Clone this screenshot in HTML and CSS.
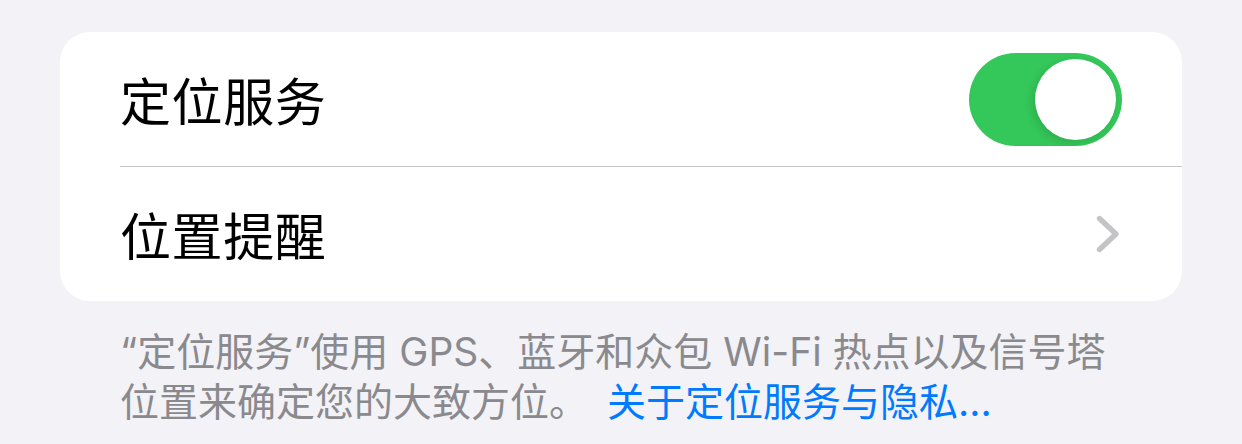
FILE: index.html
```html
<!DOCTYPE html>
<html lang="zh-CN">
<head>
<meta charset="utf-8">
<link rel="stylesheet" href="styles.css">
</head>
<body>
  <div class="card">
    <div class="row">
      <span class="label">定位服务</span>
      <div class="toggle on"><div class="knob"></div></div>
    </div>
    <div class="sep"></div>
    <div class="row">
      <span class="label">位置提醒</span>
      <svg class="chevron" width="24" height="38" viewBox="0 0 24 38">
        <path d="M3.5 3.5 L20 19 L3.5 34.5" fill="none" stroke="#c4c4c7" stroke-width="5.4" stroke-linecap="round" stroke-linejoin="round"/>
      </svg>
    </div>
  </div>
  <p class="footer">“定位服务”使用 GPS、蓝牙和众包 Wi-Fi 热点以及信号塔<br>位置来确定您的大致方位。 <a class="link">关于定位服务与隐私...</a></p>
</body>
</html>
```
FILE: styles.css
```css
html, body {
  margin: 0;
  padding: 0;
  background: #f2f2f7;
}
body {
  font-family: "Inter", "Noto Sans CJK SC", sans-serif;
  width: 1242px;
  height: 444px;
  overflow: hidden;
}
.card {
  margin: 32px 60px 0 60px;
  background: #ffffff;
  border-radius: 30px;
  overflow: hidden;
}
.row {
  height: 134px;
  display: flex;
  align-items: center;
  justify-content: space-between;
  padding: 0 60px 0 60px;
}
.label {
  font-size: 51px;
  color: #000;
  letter-spacing: 0.6px;
}
.sep {
  height: 1px;
  background: #c6c6c8;
  margin-left: 60px;
}
.toggle {
  width: 153px;
  height: 93px;
  border-radius: 47px;
  background: #34c759;
  position: relative;
}
.knob {
  position: absolute;
  top: 6px;
  right: 6px;
  width: 81px;
  height: 81px;
  border-radius: 50%;
  background: #fff;
  box-shadow: -3px 3px 9px rgba(0, 0, 0, 0.12), 0 0 1px rgba(0, 0, 0, 0.04);
}
.chevron {
  display: block;
  margin-right: 2px;
}
.footer {
  margin: 26px 0 0 120px;
  font-size: 39px;
  line-height: 50px;
  color: #8a8a8e;
  letter-spacing: 0;
}
.link {
  color: #007aff;
  margin-left: 8px;
}
```
